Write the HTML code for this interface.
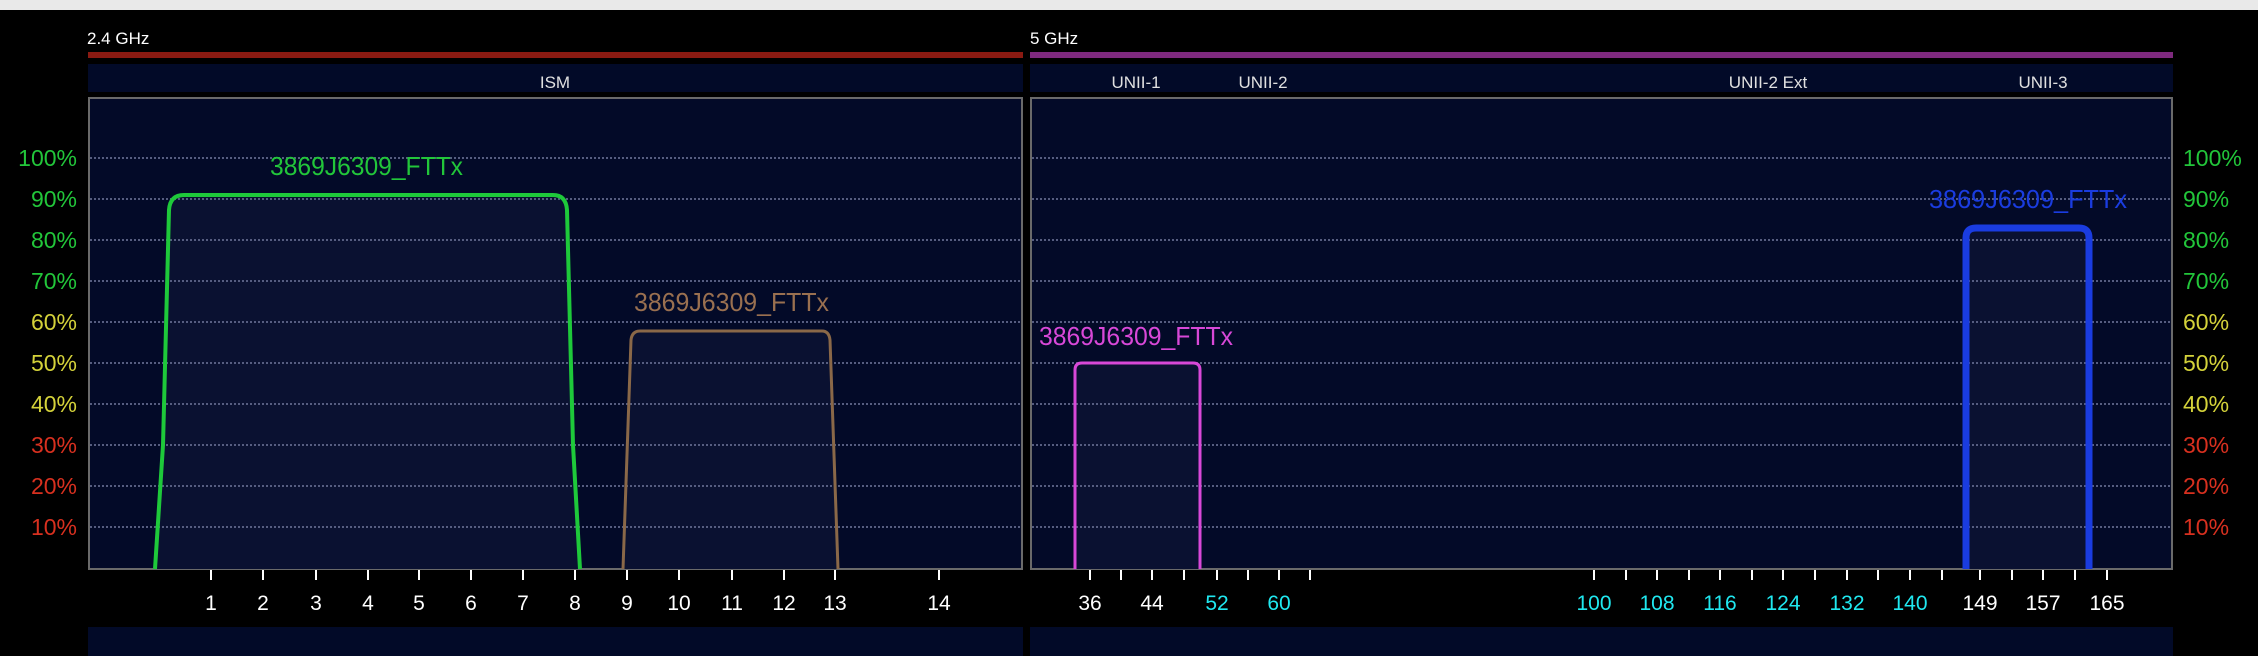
<!DOCTYPE html>
<html><head><meta charset="utf-8"><style>
html,body{margin:0;padding:0;background:#000;width:2258px;height:656px;overflow:hidden}
svg{display:block}
text{font-family:"Liberation Sans",sans-serif}
</style></head><body>
<svg width="2258" height="656" viewBox="0 0 2258 656" xmlns="http://www.w3.org/2000/svg">
<rect x="0" y="0" width="2258" height="10" fill="#e9e9e9"/>
<text x="87" y="44" font-size="17" fill="#fff">2.4 GHz</text>
<text x="1030" y="44" font-size="17" fill="#fff">5 GHz</text>
<rect x="88" y="52" width="935" height="6" fill="#8a1a12"/>
<rect x="1030" y="52" width="1143" height="6" fill="#7e2a7e"/>
<rect x="88" y="64" width="935" height="28" fill="#020a28"/>
<rect x="1030" y="64" width="1143" height="28" fill="#020a28"/>
<g font-size="17" fill="#e0e0e0" text-anchor="middle">
<text x="555" y="88">ISM</text>
<text x="1136" y="88">UNII-1</text>
<text x="1263" y="88">UNII-2</text>
<text x="1768" y="88">UNII-2 Ext</text>
<text x="2043" y="88">UNII-3</text>
</g>
<rect x="89" y="98" width="933" height="471" fill="#030a28" stroke="#6a6a6a" stroke-width="2"/>
<rect x="1031" y="98" width="1141" height="471" fill="#030a28" stroke="#6a6a6a" stroke-width="2"/>
<path d="M155 569 L163 445 L169 210 Q170 195 184 195 L553 195 Q566 195 567 210 L573 445 L580 569Z" fill="#0a1131"/>
<path d="M623 569 L631 340 Q632 331 640 331 L822 331 Q829 331 830 340 L838 569Z" fill="#0a1131"/>
<path d="M1075 569 L1075 370 Q1075 363 1082 363 L1193 363 Q1200 363 1200 370 L1200 569Z" fill="#0a1131"/>
<path d="M1966 569 L1966 238 Q1966 228 1976 228 L2079 228 Q2089 228 2089 238 L2089 569Z" fill="#0a1131"/>
<g stroke="#565d80" stroke-width="2" stroke-dasharray="2,2">
<path d="M90 158H1021M90 199H1021M90 240H1021M90 281H1021M90 322H1021M90 363H1021M90 404H1021M90 445H1021M90 486H1021M90 527H1021"/>
<path d="M1032 158H2171M1032 199H2171M1032 240H2171M1032 281H2171M1032 322H2171M1032 363H2171M1032 404H2171M1032 445H2171M1032 486H2171M1032 527H2171"/>
</g>
<g font-size="23">
<g text-anchor="end">
<text x="77" y="166" fill="#22c63a">100%</text><text x="77" y="207" fill="#22c63a">90%</text><text x="77" y="248" fill="#22c63a">80%</text><text x="77" y="289" fill="#22c63a">70%</text>
<text x="77" y="330" fill="#d4d23a">60%</text><text x="77" y="371" fill="#d4d23a">50%</text><text x="77" y="412" fill="#d4d23a">40%</text>
<text x="77" y="453" fill="#d8301f">30%</text><text x="77" y="494" fill="#d8301f">20%</text><text x="77" y="535" fill="#d8301f">10%</text>
</g>
<g>
<text x="2183" y="166" fill="#22c63a">100%</text><text x="2183" y="207" fill="#22c63a">90%</text><text x="2183" y="248" fill="#22c63a">80%</text><text x="2183" y="289" fill="#22c63a">70%</text>
<text x="2183" y="330" fill="#d4d23a">60%</text><text x="2183" y="371" fill="#d4d23a">50%</text><text x="2183" y="412" fill="#d4d23a">40%</text>
<text x="2183" y="453" fill="#d8301f">30%</text><text x="2183" y="494" fill="#d8301f">20%</text><text x="2183" y="535" fill="#d8301f">10%</text>
</g>
</g>
<g fill="none">
<path d="M155 569 L163 445 L169 210 Q170 195 184 195 L553 195 Q566 195 567 210 L573 445 L580 569" stroke="#1ec93a" stroke-width="4"/>
<path d="M623 569 L631 340 Q632 331 640 331 L822 331 Q829 331 830 340 L838 569" stroke="#8a6848" stroke-width="3"/>
<path d="M1075 569 L1075 370 Q1075 363 1082 363 L1193 363 Q1200 363 1200 370 L1200 569" stroke="#d848d8" stroke-width="3"/>
<path d="M1966 569 L1966 238 Q1966 228 1976 228 L2079 228 Q2089 228 2089 238 L2089 569" stroke="#1a3ce0" stroke-width="7"/>
</g>
<g font-size="26" lengthAdjust="spacingAndGlyphs">
<text x="270" y="175" textLength="193" lengthAdjust="spacingAndGlyphs" fill="#22c63a">3869J6309_FTTx</text>
<text x="634" y="311" textLength="195" lengthAdjust="spacingAndGlyphs" fill="#9a7050">3869J6309_FTTx</text>
<text x="1039" y="345" textLength="194" lengthAdjust="spacingAndGlyphs" fill="#d848d8">3869J6309_FTTx</text>
<text x="1929" y="208" textLength="198" lengthAdjust="spacingAndGlyphs" fill="#1a3ce0">3869J6309_FTTx</text>
</g>
<g stroke="#fff" stroke-width="2">
<path d="M211 570V580M263 570V580M316 570V580M368 570V580M419 570V580M471 570V580M523 570V580M575 570V580M627 570V580M679 570V580M732 570V580M784 570V580M835 570V580M939 570V580"/>
<path d="M1090 570V580M1121 570V580M1152 570V580M1184 570V580M1217 570V580M1248 570V580M1279 570V580M1310 570V580M1594 570V580M1626 570V580M1657 570V580M1689 570V580M1720 570V580M1752 570V580M1783 570V580M1815 570V580M1847 570V580M1878 570V580M1910 570V580M1942 570V580M1980 570V580M2012 570V580M2043 570V580M2075 570V580M2107 570V580"/>
</g>
<g font-size="21" text-anchor="middle" fill="#fff">
<text x="211" y="610">1</text><text x="263" y="610">2</text><text x="316" y="610">3</text><text x="368" y="610">4</text><text x="419" y="610">5</text><text x="471" y="610">6</text><text x="523" y="610">7</text><text x="575" y="610">8</text><text x="627" y="610">9</text><text x="679" y="610">10</text><text x="732" y="610">11</text><text x="784" y="610">12</text><text x="835" y="610">13</text><text x="939" y="610">14</text>
<text x="1090" y="610">36</text><text x="1152" y="610">44</text>
<text x="1217" y="610" fill="#20e8f0">52</text><text x="1279" y="610" fill="#20e8f0">60</text>
<text x="1594" y="610" fill="#20e8f0">100</text><text x="1657" y="610" fill="#20e8f0">108</text><text x="1720" y="610" fill="#20e8f0">116</text><text x="1783" y="610" fill="#20e8f0">124</text><text x="1847" y="610" fill="#20e8f0">132</text><text x="1910" y="610" fill="#20e8f0">140</text>
<text x="1980" y="610">149</text><text x="2043" y="610">157</text><text x="2107" y="610">165</text>
</g>
<rect x="88" y="627" width="935" height="29" fill="#020a28"/>
<rect x="1030" y="627" width="1143" height="29" fill="#020a28"/>
</svg>
</body></html>
